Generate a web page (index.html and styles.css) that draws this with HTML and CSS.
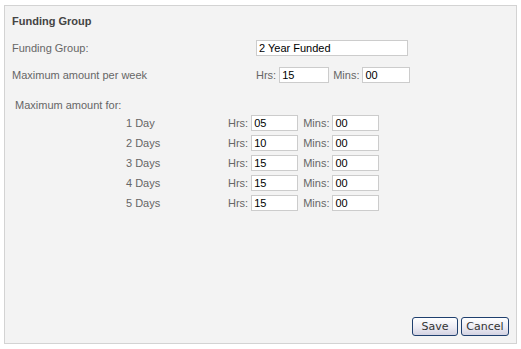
FILE: index.html
```html
<!DOCTYPE html>
<html lang="en">
<head>
  <meta charset="UTF-8" />
  <title>Funding Group</title>
  <link rel="stylesheet" href="styles.css">
</head>
<body>
  <div class="panel">
    <h1>Funding Group</h1>

    <div class="row first">
      <label class="label">Funding Group:</label>
      <input type="text" class="name" value="2 Year Funded" />
    </div>

    <div class="row week">
      <label class="label">Maximum amount per week</label>
      <span class="unit">Hrs:</span><input type="text" class="hrs" value="15" />
      <span class="unit mins-label">Mins:</span><input type="text" class="mins" value="00" />
    </div>

    <div class="days">
      <div class="days-title">Maximum amount for:</div>
      <div class="day"><span class="day-name">1 Day</span><span class="unit">Hrs:</span><input type="text" value="05" /><span class="unit mins-label">Mins:</span><input type="text" value="00" /></div>
      <div class="day"><span class="day-name">2 Days</span><span class="unit">Hrs:</span><input type="text" value="10" /><span class="unit mins-label">Mins:</span><input type="text" value="00" /></div>
      <div class="day"><span class="day-name">3 Days</span><span class="unit">Hrs:</span><input type="text" value="15" /><span class="unit mins-label">Mins:</span><input type="text" value="00" /></div>
      <div class="day"><span class="day-name">4 Days</span><span class="unit">Hrs:</span><input type="text" value="15" /><span class="unit mins-label">Mins:</span><input type="text" value="00" /></div>
      <div class="day"><span class="day-name">5 Days</span><span class="unit">Hrs:</span><input type="text" value="15" /><span class="unit mins-label">Mins:</span><input type="text" value="00" /></div>
    </div>

    <div class="buttons">
      <button class="save">Save</button>
      <button class="cancel">Cancel</button>
    </div>
  </div>
</body>
</html>
```

FILE: styles.css
```css
body {
  margin: 0;
  font-family: "Liberation Sans", Arial, sans-serif;
  font-size: 11px;
  color: #666;
  background: #fff;
}
.panel {
  margin: 5px 0 0 4px;
  width: 513px;
  height: 339px;
  border: 1px solid #d3d3d3;
  background: #f3f3f3;
  padding: 0 7px 0 7px;
  box-sizing: border-box;
  display: flex;
  flex-direction: column;
}
h1 {
  font-size: 11px;
  line-height: 16px;
  color: #444;
  margin: 7px 0 0 0;
}
.row {
  display: flex;
  align-items: center;
  height: 16px;
  margin-top: 11px;
}
.label {
  width: 244px;
  flex-shrink: 0;
}
input {
  height: 16px;
  box-sizing: border-box;
  border: 1px solid #ccc;
  background: #fff;
  font-family: "Liberation Sans", Arial, sans-serif;
  font-size: 11px;
  color: #000;
  padding: 0 2px;
  margin: 0 0 0 3px;
  outline: none;
}
.row.first input {
  margin-left: 0;
}
.name {
  width: 152px;
}
.hrs {
  width: 50px;
}
.mins {
  width: 48px;
}
.mins-label {
  margin-left: 4px;
}
.days {
  margin-top: 14px;
  padding-left: 3px;
}
.days-title {
  line-height: 16px;
  margin-bottom: 2px;
}
.day {
  display: flex;
  align-items: center;
  height: 16px;
  margin-bottom: 4px;
  padding-left: 111px;
}
.day-name {
  width: 102px;
  flex-shrink: 0;
}
.day input {
  width: 47px;
}
.day .mins-label {
  margin-left: 5px;
}
.buttons {
  margin-top: auto;
  margin-bottom: 7px;
  display: flex;
  justify-content: flex-end;
  gap: 3px;
}
button {
  height: 19px;
  padding: 0;
  border: 1px solid #1f3f6e;
  border-radius: 3px;
  background: linear-gradient(#ffffff, #ecebf3 55%, #d3d2e2);
  font-family: "DejaVu Sans", Verdana, sans-serif;
  font-size: 11px;
  color: #333;
  cursor: pointer;
}
button.save {
  width: 46px;
}
button.cancel {
  width: 48px;
}
```
